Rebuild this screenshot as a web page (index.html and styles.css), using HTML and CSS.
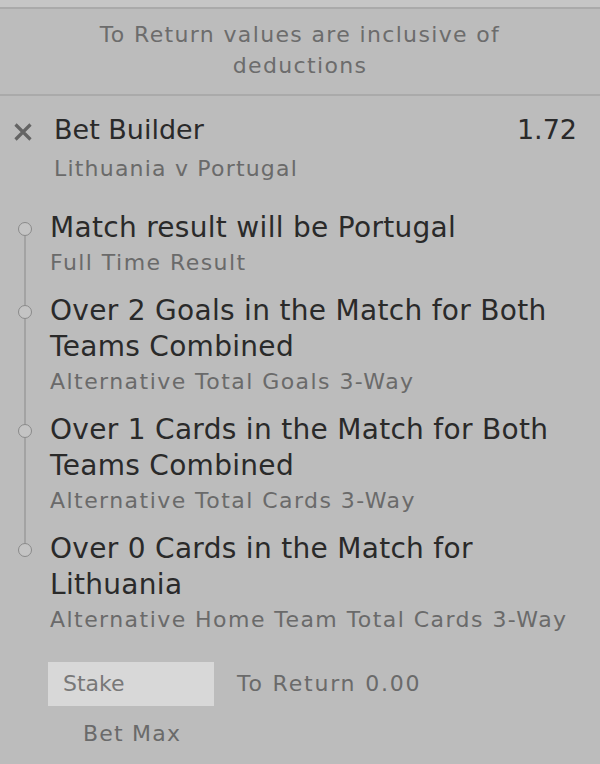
FILE: index.html
```html
<!DOCTYPE html>
<html>
<head>
<meta charset="utf-8">
<link rel="stylesheet" href="styles.css">
</head>
<body>
<div class="slip">
  <div class="topbar"></div>
  <div class="notice">To Return values are inclusive of<br>deductions</div>
  <div class="bet">
    <div class="bet-head">
      <svg class="remove" width="20" height="20" viewBox="0 0 20 20"><path d="M2.5 2.5 L17.5 17.5 M17.5 2.5 L2.5 17.5" stroke="#646464" stroke-width="3.2" fill="none"/></svg>
      <span class="bet-name">Bet Builder</span>
      <span class="odds">1.72</span>
    </div>
    <div class="fixture">Lithuania v Portugal</div>
  </div>
  <div class="legs">
    <div class="leg first">
      <div class="rail"><span class="seg top"></span><span class="dot"></span><span class="seg bottom"></span></div>
      <div class="leg-text">
        <div class="leg-title">Match result will be Portugal</div>
        <div class="leg-market">Full Time Result</div>
      </div>
    </div>
    <div class="leg">
      <div class="rail"><span class="seg top"></span><span class="dot"></span><span class="seg bottom"></span></div>
      <div class="leg-text">
        <div class="leg-title">Over 2 Goals in the Match for Both Teams Combined</div>
        <div class="leg-market">Alternative Total Goals 3-Way</div>
      </div>
    </div>
    <div class="leg">
      <div class="rail"><span class="seg top"></span><span class="dot"></span><span class="seg bottom"></span></div>
      <div class="leg-text">
        <div class="leg-title">Over 1 Cards in the Match for Both Teams Combined</div>
        <div class="leg-market">Alternative Total Cards 3-Way</div>
      </div>
    </div>
    <div class="leg last">
      <div class="rail"><span class="seg top"></span><span class="dot"></span><span class="seg bottom"></span></div>
      <div class="leg-text">
        <div class="leg-title">Over 0 Cards in the Match for Lithuania</div>
        <div class="leg-market">Alternative Home Team Total Cards 3-Way</div>
      </div>
    </div>
  </div>
  <div class="stake-row">
    <div class="stake-box">Stake</div>
    <div class="to-return">To Return 0.00</div>
  </div>
  <div class="bet-max">Bet Max</div>
</div>
</body>
</html>
```
FILE: styles.css
```css
html, body {
  margin: 0;
  padding: 0;
  background: #bcbcbc;
}
body {
  width: 600px;
  height: 764px;
  overflow: hidden;
  font-family: "DejaVu Sans", Verdana, sans-serif;
}
.topbar {
  height: 7px;
  background: #c6c6c6;
  border-bottom: 2px solid #aaaaaa;
}
.notice {
  padding: 10px 20px 13px;
  text-align: center;
  font-size: 22px;
  line-height: 31px;
  letter-spacing: 1.35px;
  color: #6c6c6c;
  border-bottom: 2px solid #aaaaaa;
}
.bet {
  padding: 16px 23px 0 13px;
}
.bet-head {
  display: flex;
  align-items: center;
  height: 36px;
}
.remove {
  margin-top: 3px;
  flex: none;
}
.bet-name {
  margin-left: 21px;
  font-size: 27px;
  line-height: 36px;
  color: #2a2a2a;
  flex: 1;
}
.odds {
  font-size: 27px;
  line-height: 36px;
  color: #2a2a2a;
}
.fixture {
  margin-top: 5px;
  padding-left: 41px;
  font-size: 22px;
  line-height: 32px;
  letter-spacing: 1.2px;
  color: #6a6a6a;
}
.legs {
  margin-top: 25px;
  padding-right: 23px;
}
.leg {
  display: flex;
}
.rail {
  width: 50px;
  flex: none;
  display: flex;
  flex-direction: column;
  align-items: center;
}
.seg {
  width: 2px;
  background: #a3a3a3;
}
.seg.top {
  height: 12px;
  flex: none;
}
.seg.bottom {
  flex: 1;
}
.first .seg.top,
.last .seg.bottom {
  visibility: hidden;
}
.dot {
  width: 14px;
  height: 14px;
  box-sizing: border-box;
  border: 1.5px solid #8a8a8a;
  border-radius: 50%;
  background: #c4c4c4;
  flex: none;
}
.leg-text {
  flex: 1;
  padding-bottom: 13px;
}
.leg-title {
  font-size: 28px;
  line-height: 36px;
  letter-spacing: 0.3px;
  color: #2a2a2a;
}
.leg-market {
  font-size: 22px;
  line-height: 34px;
  letter-spacing: 1.45px;
  color: #6a6a6a;
}
.stake-row {
  margin-top: 12px;
  padding-left: 48px;
  display: flex;
  align-items: center;
  gap: 23px;
}
.stake-box {
  width: 166px;
  height: 44px;
  box-sizing: border-box;
  padding-left: 15px;
  background: #d8d8d8;
  font-size: 22px;
  line-height: 44px;
  color: #787878;
}
.to-return {
  font-size: 22px;
  line-height: 44px;
  letter-spacing: 1.8px;
  color: #6a6a6a;
}
.bet-max {
  margin-top: 12px;
  padding-left: 83px;
  font-size: 22px;
  line-height: 32px;
  letter-spacing: 1.2px;
  color: #6a6a6a;
}
```
